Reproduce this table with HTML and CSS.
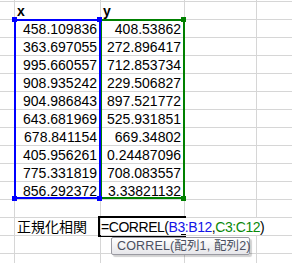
FILE: index.html
```html
<!DOCTYPE html>
<html lang="ja">
<head>
<meta charset="utf-8">
<title>正規化相関</title>
<link rel="stylesheet" href="styles.css">
</head>
<body>
<div class="sheet">
  <div class="grid">
    <div class="c top"></div><div class="c top"></div><div class="c top"></div><div class="c top"></div><div class="c top"></div>

    <div class="c"></div><div class="c hdr">x</div><div class="c hdr">y</div><div class="c"></div><div class="c"></div>

    <div class="c"></div><div class="c num">458.109836</div><div class="c num">408.53862</div><div class="c"></div><div class="c"></div>
    <div class="c"></div><div class="c num">363.697055</div><div class="c num">272.896417</div><div class="c"></div><div class="c"></div>
    <div class="c"></div><div class="c num">995.660557</div><div class="c num">712.853734</div><div class="c"></div><div class="c"></div>
    <div class="c"></div><div class="c num">908.935242</div><div class="c num">229.506827</div><div class="c"></div><div class="c"></div>
    <div class="c"></div><div class="c num">904.986843</div><div class="c num">897.521772</div><div class="c"></div><div class="c"></div>
    <div class="c"></div><div class="c num">643.681969</div><div class="c num">525.931851</div><div class="c"></div><div class="c"></div>
    <div class="c"></div><div class="c num">678.841154</div><div class="c num">669.34802</div><div class="c"></div><div class="c"></div>
    <div class="c"></div><div class="c num">405.956261</div><div class="c num">0.24487096</div><div class="c"></div><div class="c"></div>
    <div class="c"></div><div class="c num">775.331819</div><div class="c num">708.083557</div><div class="c"></div><div class="c"></div>
    <div class="c"></div><div class="c num">856.292372</div><div class="c num">3.33821132</div><div class="c"></div><div class="c"></div>

    <div class="c"></div><div class="c"></div><div class="c"></div><div class="c"></div><div class="c"></div>

    <div class="c"></div><div class="c label">正規化相関</div><div class="c formula">=CORREL(<span class="ref-b">B3:B12</span>,<span class="ref-c">C3:C12</span>)</div>

    <div class="c"></div><div class="c"></div><div class="c"></div><div class="c"></div><div class="c"></div>
    <div class="c"></div><div class="c"></div><div class="c"></div><div class="c"></div><div class="c"></div>
    <div class="c"></div><div class="c"></div><div class="c"></div><div class="c"></div><div class="c"></div>
  </div>

  <div class="range range-c"></div>
  <div class="range range-b"></div>
  <div class="handle h-blue h-b-tl"></div>
  <div class="handle h-blue h-b-tr"></div>
  <div class="handle h-blue h-b-bl"></div>
  <div class="handle h-blue h-b-br"></div>
  <div class="handle h-green h-c-tr"></div>
  <div class="handle h-green h-c-br"></div>

  <div class="active"></div>
  <div class="fill-handle"></div>

  <div class="tip">CORREL(配列1, 配列2)</div>
</div>
</body>
</html>
```

FILE: styles.css
```css
html, body {
  margin: 0;
  padding: 0;
  background: #ffffff;
}

body {
  width: 292px;
  height: 263px;
  overflow: hidden;
  font-family: "Liberation Sans", "Noto Sans CJK JP", sans-serif;
  font-size: 14px;
  color: #000000;
}

.sheet {
  position: relative;
  width: 292px;
  height: 263px;
  overflow: hidden;
}

.grid {
  display: grid;
  grid-template-columns: 15px 86px 84px 72px 60px;
  grid-template-rows: 2px repeat(16, 18px);
}

.c {
  box-sizing: border-box;
  border-right: 1px solid #d6d6d6;
  border-bottom: 1px solid #d6d6d6;
  line-height: 18px;
  white-space: nowrap;
  overflow: visible;
}

.hdr {
  font-weight: bold;
  padding-left: 2px;
}

.num {
  text-align: right;
  padding-right: 3px;
}

.label {
  padding-left: 2px;
  font-family: "Noto Sans CJK JP", sans-serif;
  line-height: 17px;
}

.formula {
  grid-column: span 3;
  padding-left: 0;
  border-right: none;
  letter-spacing: -0.45px;
  position: relative;
  z-index: 2;
}

.ref-b { color: #1414e6; }
.ref-c { color: #0a8a0a; }

.range {
  position: absolute;
  box-sizing: border-box;
  border: 2px solid;
}

.range-b {
  left: 14px;
  top: 19px;
  width: 87px;
  height: 180px;
  border-color: #0000ff;
}

.range-c {
  left: 100px;
  top: 19px;
  width: 85px;
  height: 180px;
  border-color: #008000;
}

.handle {
  position: absolute;
  width: 5px;
  height: 5px;
}

.h-blue { background: #0000ff; }
.h-green { background: #008000; }

.h-b-tl { left: 12px; top: 17px; }
.h-b-tr { left: 97px; top: 17px; }
.h-b-bl { left: 12px; top: 196px; }
.h-b-br { left: 97px; top: 196px; }
.h-c-tr { left: 181px; top: 17px; }
.h-c-br { left: 181px; top: 196px; }

.active {
  position: absolute;
  left: 98px;
  top: 216px;
  width: 88px;
  height: 21px;
  box-sizing: border-box;
  border: 2px solid #000000;
  border-right: none;
  z-index: 1;
}

.fill-handle {
  position: absolute;
  left: 181px;
  top: 234px;
  width: 5px;
  height: 5px;
  background: #000000;
  z-index: 1;
}

.tip {
  position: absolute;
  left: 111px;
  top: 237px;
  width: 139px;
  box-sizing: border-box;
  height: 18px;
  padding: 0 0 0 5px;
  font-size: 12.5px;
  letter-spacing: 0.15px;
  line-height: 16px;
  color: #4a4f60;
  background: linear-gradient(#ffffff, #e6e6ea);
  border: 1px solid #9a9aa2;
  border-radius: 2px;
  box-shadow: 2px 2px 1px rgba(0, 0, 0, 0.18);
  white-space: nowrap;
  z-index: 3;
}
```
